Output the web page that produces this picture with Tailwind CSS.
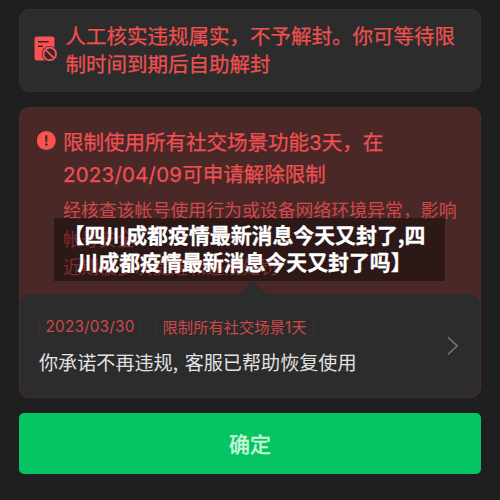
<!DOCTYPE html>
<html lang="zh-CN">
<head>
<meta charset="utf-8">
<title>限制通知</title>
<script src="https://cdn.jsdelivr.net/npm/@tailwindcss/browser@4"></script>
</head>
<body class="bg-[#1f1f1f]">
<main class="relative flex h-[500px] w-[500px] flex-col overflow-hidden bg-[#1f1f1f] px-[19px] pt-[9px] font-['Noto_Sans_CJK_SC',sans-serif] whitespace-nowrap">
  <section class="flex h-[83px] shrink-0 rounded-[10px] border border-[#402b2b] bg-[#2c2c2c] pt-[11px] pl-[14px]">
    <svg class="mt-[15px] h-[26px] w-[24px] shrink-0" viewBox="0 0 24 26">
      <rect x="0.5" y="0.5" width="20" height="24" rx="2.5" fill="#fa5151"/>
      <path d="M4 5.7h10.5M4 10.2h5" stroke="#3b2020" stroke-width="1.4"/>
      <circle cx="15.7" cy="17.9" r="8" fill="#2c2c2c"/>
      <circle cx="15.7" cy="17.9" r="7.3" fill="#fa5151"/>
      <circle cx="15.7" cy="17.9" r="5.3" fill="#2c2c2c"/>
      <path d="M11.9 14.1l7.6 7.6" stroke="#fa5151" stroke-width="1.8"/>
    </svg>
    <p class="ml-[7.5px] text-[20.5px] leading-[28px] text-[#ee5050] [-webkit-text-stroke:0.25px_#ee5050]">人工核实违规属实，不予解封。你可等待限<br>制时间到期后自助解封</p>
  </section>

  <section class="mt-[15px] flex h-[291px] shrink-0 flex-col rounded-[10px] border border-[#4b2a2a] bg-[#4b2828]">
    <div class="flex h-[186px] shrink-0 pl-[17px]">
      <svg class="mt-[23px] h-[20px] w-[20px] shrink-0" viewBox="0 0 20 20">
        <circle cx="9.3" cy="9.5" r="9.5" fill="#fa5151"/>
        <path d="M8.1 4.3h2.4l-.3 6.9H8.4z" fill="#4b2828"/>
        <circle cx="9.3" cy="13.6" r="1.3" fill="#4b2828"/>
      </svg>
      <div class="ml-[6px] pt-[17px]">
        <h2 class="text-[20.5px] leading-[32px] text-[#ee5050] [-webkit-text-stroke:0.25px_#ee5050]">限制使用所有社交场景功能<span class="font-[Inter] leading-none">3</span>天，在<br><span class="font-[Inter] leading-none tracking-[0.2px]">2023/04/09</span>可申请解除限制</h2>
        <p class="mt-[6px] text-[17.9px] leading-[28.5px] text-[#d14848]">经核查该帐号使用行为或设备网络环境异常，影响<br>帐号安全<br>近期被多次提醒和违规处罚</p>
      </div>
    </div>
    <div class="relative flex flex-1 items-center justify-between rounded-[10px] bg-[#2c2c2c] pr-[21px] pl-[19px]">
      <svg class="absolute -top-[13px] left-[219px] h-[14px] w-[28px]" viewBox="0 0 28 14"><path d="M0 14L12 1.5q2-2 4 0L28 14z" fill="#2c2c2c"/></svg>
      <div class="-mt-[2px]">
        <div class="flex gap-[14px] text-[15.3px] leading-[24px] text-[#d14848]">
          <span class="h-[29px] w-[102px] rounded-[2px] border border-[#442929] text-center font-[Inter] leading-[26px] tracking-[0.2px]">2023/03/30</span>
          <span class="h-[29px] w-[159px] rounded-[2px] border border-[#442929] text-center">限制所有社交场景<span class="font-[Inter] leading-none">1</span>天</span>
        </div>
        <p class="mt-[7px] text-[19.1px] leading-[27px] text-[#e2e2e2]">你承诺不再违规<span class="inline-block w-[12px]">,</span>客服已帮助恢复使用</p>
      </div>
      <svg class="h-[20px] w-[12px]" viewBox="0 0 12 20" fill="none"><path d="M1 1.3l9.2 8.5L1 18.3" stroke="#737373" stroke-width="1.6"/></svg>
    </div>
  </section>

  <button class="mt-[15px] h-[61px] shrink-0 rounded-[5px] bg-[#07c463] text-[21px] font-normal text-[#c6f7da] [-webkit-text-stroke:0.5px_#c6f7da]">确定</button>

  <div class="absolute top-[218px] left-[54px] h-[63px] w-[391px] bg-black/40 pt-[3px] pr-[10px] text-center text-[20.9px] leading-[26.5px] font-bold text-white [-webkit-text-stroke:0.3px_white]">【四川成都疫情最新消息今天又封了,四<br>川成都疫情最新消息今天又封了吗】</div>
</main>
</body>
</html>
